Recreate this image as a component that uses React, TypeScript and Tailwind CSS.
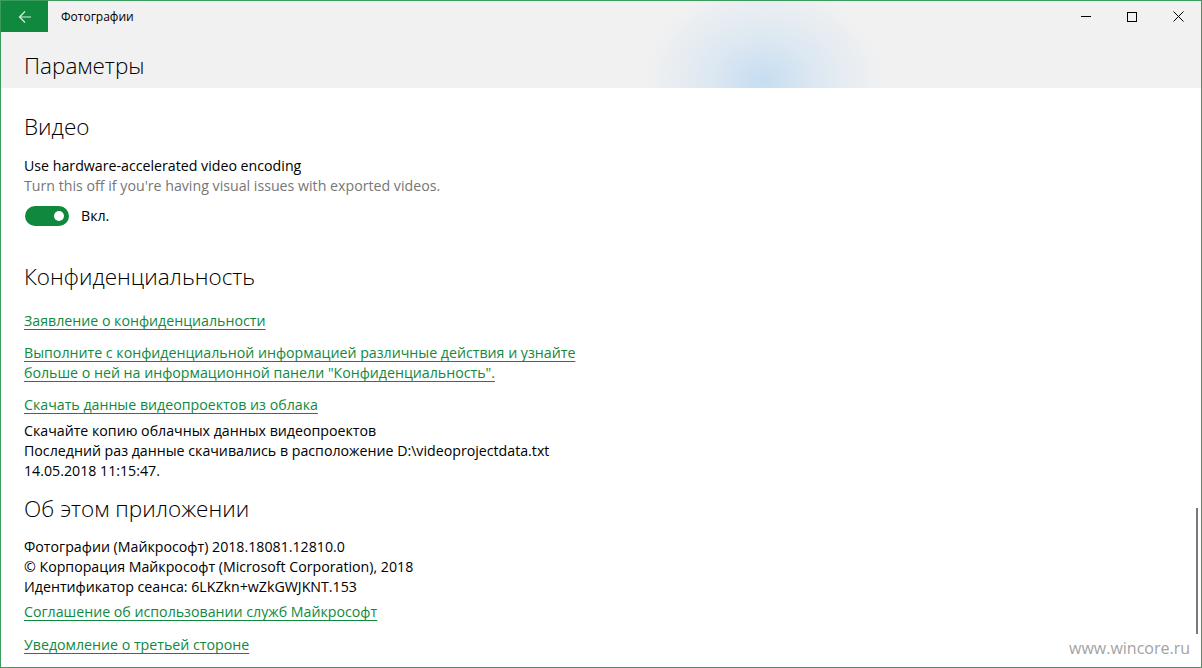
import React from "react";

const font = { fontFamily: '"Open Sans", "Noto Sans", sans-serif' };

function Link({ children }: { children: React.ReactNode }) {
  return (
    <a className="text-[#10893e] underline underline-offset-[3px] decoration-[1px] cursor-pointer">
      {children}
    </a>
  );
}

export default function App() {
  return (
    <div
      className="relative w-[1202px] h-[668px] overflow-hidden border border-[#3c9b5f] bg-white text-black"
      style={font}
    >
      {/* header */}
      <div className="h-[87px] bg-[radial-gradient(ellipse_120px_95px_at_762px_80px,#c6ddf1_0%,#dde8f2_45%,#f1f1f1_100%)] bg-[#f1f1f1]">
        <div className="flex h-[31px] items-center">
          <button className="flex h-[31px] w-[47px] items-center justify-center bg-[#10893e]">
            <svg width="14" height="14" viewBox="0 0 14 14" fill="none">
              <path d="M7 1.5 1.5 7 7 12.5M1.5 7H13" stroke="#d8eedf" strokeWidth="1.2" />
            </svg>
          </button>
          <span className="ml-[13px] text-[12px]">Фотографии</span>
          <div className="ml-auto flex h-full">
            <div className="flex w-[46px] items-center justify-center">
              <div className="h-px w-[10px] bg-black" />
            </div>
            <div className="flex w-[46px] items-center justify-center">
              <div className="h-[10px] w-[10px] border border-black" />
            </div>
            <div className="flex w-[46px] items-center justify-center">
              <svg width="11" height="11" viewBox="0 0 11 11">
                <path d="M0.5 0.5 10.5 10.5M10.5 0.5 0.5 10.5" stroke="#000" strokeWidth="1" />
              </svg>
            </div>
          </div>
        </div>
        <div className="pl-[23px] pt-[18px] text-[22.5px] font-light leading-[32px]">Параметры</div>
      </div>

      {/* content */}
      <div className="pl-[23px] text-[14.2px] leading-[20px]">
        <h2 className="mt-[23px] text-[22.5px] font-light leading-[32px]">Видео</h2>
        <div className="mt-[13px]">Use hardware-accelerated video encoding</div>
        <div className="text-[#767676]">Turn this off if you're having visual issues with exported videos.</div>
        <div className="mt-[10px] flex items-center">
          <div className="ml-px flex h-[20px] w-[44px] items-center justify-end rounded-full bg-[#10893e] pr-[5px]">
            <div className="h-[10px] w-[10px] rounded-full bg-white" />
          </div>
          <span className="ml-[12px]">Вкл.</span>
        </div>

        <h2 className="mt-[35px] text-[22.5px] font-light leading-[32px]">Конфиденциальность</h2>
        <div className="mt-[18px]">
          <Link>Заявление о конфиденциальности</Link>
        </div>
        <div className="mt-[12px] w-[560px]">
          <Link>
            Выполните с конфиденциальной информацией различные действия и узнайте больше о ней на
            информационной панели "Конфиденциальность".
          </Link>
        </div>
        <div className="mt-[12px]">
          <Link>Скачать данные видеопроектов из облака</Link>
        </div>
        <div className="mt-[6px]">
          <div>Скачайте копию облачных данных видеопроектов</div>
          <div>Последний раз данные скачивались в расположение D:\videoprojectdata.txt</div>
          <div>14.05.2018 11:15:47.</div>
        </div>

        <h2 className="mt-[12px] text-[22.5px] font-light leading-[32px]">Об этом приложении</h2>
        <div className="mt-[12px]">
          <div>Фотографии (Майкрософт) 2018.18081.12810.0</div>
          <div>© Корпорация Майкрософт (Microsoft Corporation), 2018</div>
          <div>Идентификатор сеанса: 6LKZkn+wZkGWJKNT.153</div>
        </div>
        <div className="mt-[5px]">
          <Link>Соглашение об использовании служб Майкрософт</Link>
        </div>
        <div className="mt-[13px]">
          <Link>Уведомление о третьей стороне</Link>
        </div>
      </div>

      {/* scrollbar */}
      <div className="absolute right-[3px] top-[507px] h-[126px] w-[2px] bg-[#7a7a7a]" />
      {/* watermark */}
      <div className="absolute bottom-[7px] right-[11px] text-[16px] text-[#a3a3a3]">www.wincore.ru</div>
    </div>
  );
}
